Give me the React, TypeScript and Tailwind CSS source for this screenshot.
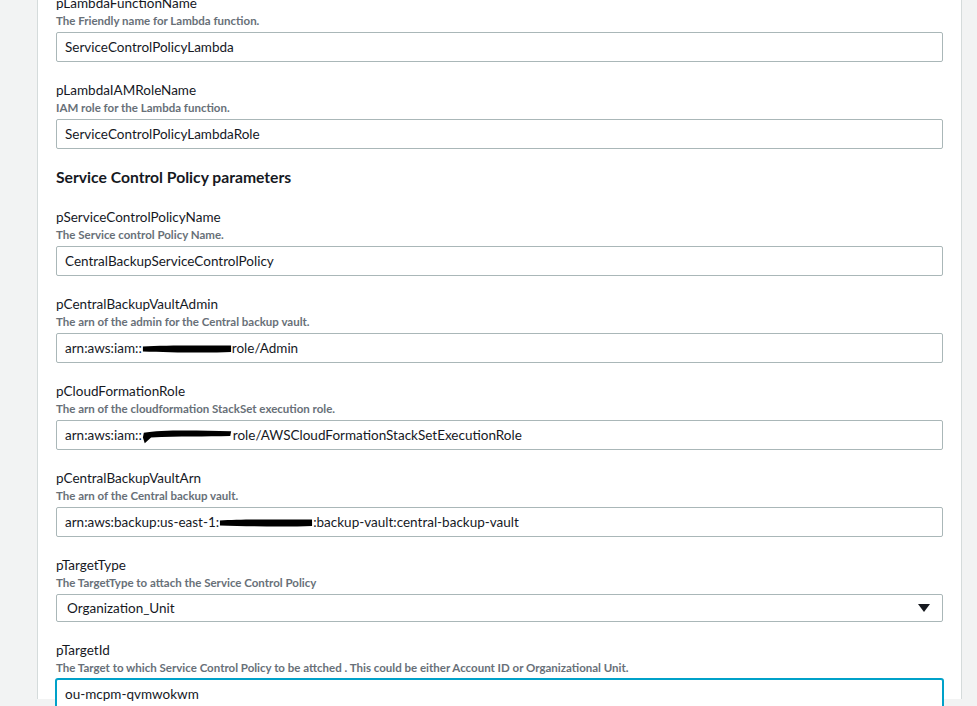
import React from 'react';

type Part = string | { redact: number; tall?: boolean };

interface FieldProps {
  label: string;
  hint: string;
  value: Part[];
  select?: boolean;
  focused?: boolean;
}

function Redaction({ width, tall }: { width: number; tall?: boolean }) {
  return (
    <span className="inline-block align-middle" style={{ width }}>
      <svg viewBox="0 0 100 20" preserveAspectRatio="none" className={`block w-full ${tall ? 'h-[16px]' : 'h-[10px]'}`}>
        {tall ? (
          <path d="M2 6 C20 2 60 3 98 4 L97 10 C70 11 40 10 10 12 L3 19 L1 12 Z" fill="#000" />
        ) : (
          <path d="M1 5 C25 2 70 3 99 3 L99 16 C75 18 30 17 1 15 Z" fill="#000" />
        )}
      </svg>
    </span>
  );
}

function Field({ label, hint, value, select, focused }: FieldProps) {
  return (
    <div className="mb-[18px]">
      <div className="h-[20px] text-[13.5px] leading-[20px] text-[#16191f]">{label}</div>
      <div className="h-[15px] text-[11.5px] leading-[15px] font-bold text-[#687078]">{hint}</div>
      <div
        className={`mt-[4px] flex items-center rounded-[2px] bg-white border ${
          focused ? 'border-[#00a1c9] shadow-[0_0_0_1px_#00a1c9] h-[30px]' : 'border-[#aab7b8]'
        } ${select ? 'h-[28px] pl-[10px] pr-[12px]' : 'h-[30px] pl-[8px] pr-[8px]'}`}
      >
        <span className="flex-1 text-[13.5px] text-[#16191f] whitespace-nowrap">
          {value.map((p, i) =>
            typeof p === 'string' ? <span key={i}>{p}</span> : <Redaction key={i} width={p.redact} tall={p.tall} />
          )}
        </span>
        {select && (
          <svg width="12" height="10" viewBox="0 0 12 10">
            <path d="M0 1 L12 1 L6 9 Z" fill="#16191f" />
          </svg>
        )}
      </div>
    </div>
  );
}

export default function App() {
  return (
    <div
      className="h-[706px] overflow-hidden bg-[#f2f3f3] pl-[37px] pr-[15px]"
      style={{ fontFamily: 'Lato, "Liberation Sans", Arial, sans-serif' }}
    >
      <div className="h-full bg-white border-x border-[#d5dbdb] px-[18px]">
        <div className="-mt-[7px]">
          <Field label="pLambdaFunctionName" hint="The Friendly name for Lambda function." value={['ServiceControlPolicyLambda']} />
          <Field label="pLambdaIAMRoleName" hint="IAM role for the Lambda function." value={['ServiceControlPolicyLambdaRole']} />
          <h2 className="h-[20px] mb-[20px] text-[15.7px] leading-[20px] font-bold text-[#16191f]">
            Service Control Policy parameters
          </h2>
          <Field label="pServiceControlPolicyName" hint="The Service control Policy Name." value={['CentralBackupServiceControlPolicy']} />
          <Field
            label="pCentralBackupVaultAdmin"
            hint="The arn of the admin for the Central backup vault."
            value={['arn:aws:iam::', { redact: 90 }, 'role/Admin']}
          />
          <Field
            label="pCloudFormationRole"
            hint="The arn of the cloudformation StackSet execution role."
            value={['arn:aws:iam::', { redact: 91, tall: true }, 'role/AWSCloudFormationStackSetExecutionRole']}
          />
          <Field
            label="pCentralBackupVaultArn"
            hint="The arn of the Central backup vault."
            value={['arn:aws:backup:us-east-1:', { redact: 94 }, ':backup-vault:central-backup-vault']}
          />
          <Field
            label="pTargetType"
            hint="The TargetType to attach the Service Control Policy"
            value={['Organization_Unit']}
            select
          />
          <Field
            label="pTargetId"
            hint="The Target to which Service Control Policy to be attched . This could be either Account ID or Organizational Unit."
            value={['ou-mcpm-qvmwokwm']}
            focused
          />
        </div>
      </div>
    </div>
  );
}
